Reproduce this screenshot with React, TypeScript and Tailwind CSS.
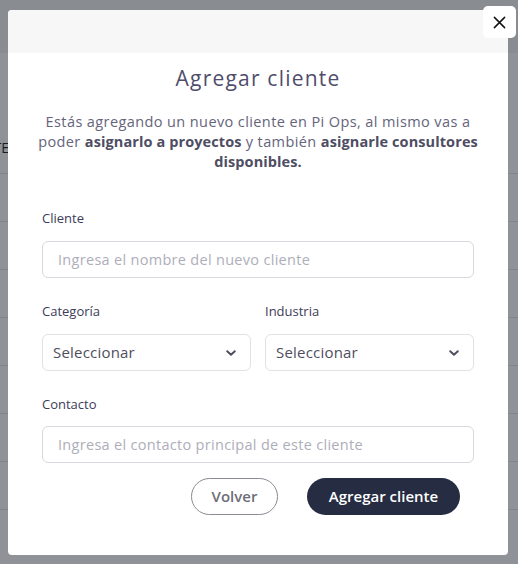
import React from 'react';

const font = { fontFamily: '"Open Sans", "Liberation Sans", sans-serif' };

const Chevron = () => (
  <svg width="14" height="14" viewBox="0 0 24 24" fill="none" stroke="#4f4e5e" strokeWidth="3.4" strokeLinecap="round" strokeLinejoin="round">
    <path d="M5.5 9l6.5 6 6.5-6" />
  </svg>
);

export default function App() {
  return (
    <div className="relative w-[518px] h-[564px] overflow-hidden bg-white" style={font}>
      {/* Page behind the modal */}
      <div className="h-[53px] bg-[#f2f3f4]" />
      <div className="pt-[85px] w-[9px] overflow-hidden flex justify-end whitespace-nowrap text-[14px] leading-[20px] text-[#111]">CLIENTE</div>
      <div className="mt-[15px]">
        {Array.from({ length: 8 }).map((_, i) => (
          <div key={i} className="h-[48px] border-t border-[#e2e2e2]" />
        ))}
      </div>

      {/* Backdrop */}
      <div className="absolute inset-0 bg-[#1f252d]/50" />

      {/* Modal */}
      <div className="absolute left-[8px] top-[10px] w-[500px] h-[545px] bg-white rounded-[4px]">
        <button className="absolute -right-[8px] -top-[4px] w-[33px] h-[32px] bg-white rounded-[5px] flex items-center justify-center">
          <svg width="13" height="13" viewBox="0 0 14 14" stroke="#111" strokeWidth="1.6" strokeLinecap="round">
            <path d="M1.5 1.5l11 11M12.5 1.5l-11 11" />
          </svg>
        </button>

        <div className="h-[43px] bg-[#f7f7f7] rounded-t-[4px]" />

        <h2 className="mt-[11px] text-center text-[21px] leading-[28px] tracking-[1.2px] font-medium text-[#4f4d6b]">Agregar cliente</h2>

        <p className="mt-[20px] px-[18px] text-center text-[14.5px] leading-[20px] tracking-[0.4px] text-[#65647a]">
          Estás agregando un nuevo cliente en Pi Ops, al mismo vas a poder{' '}
          <span className="font-bold tracking-[0.1px] text-[#4e4d63]">asignarlo a proyectos</span> y también{' '}
          <span className="font-bold tracking-[0.1px] text-[#4e4d63]">asignarle consultores disponibles.</span>
        </p>

        <div className="px-[34px] mt-[37px]">
          <label className="block text-[13px] leading-[18px] text-[#3d3c58]">Cliente</label>
          <div className="mt-[14px] h-[37px] border border-[#d8d8de] rounded-[6px] flex items-center px-[15px] text-[14.5px] tracking-[0.3px] text-[#aeaeba]">
            Ingresa el nombre del nuevo cliente
          </div>

          <div className="mt-[24px] grid grid-cols-2 gap-[14px]">
            {['Categoría', 'Industria'].map((l) => (
              <div key={l}>
                <label className="block text-[13px] leading-[18px] text-[#3d3c58]">{l}</label>
                <div className="mt-[14px] h-[37px] border border-[#e1e1e6] rounded-[6px] flex items-center justify-between pl-[10px] pr-[12px] text-[15px] tracking-[0.2px] text-[#4f4e5e]">
                  Seleccionar
                  <Chevron />
                </div>
              </div>
            ))}
          </div>

          <label className="mt-[24px] block text-[13px] leading-[18px] text-[#3d3c58]">Contacto</label>
          <div className="mt-[13px] h-[37px] border border-[#d8d8de] rounded-[6px] flex items-center px-[15px] text-[14.5px] tracking-[0.3px] text-[#aeaeba]">
            Ingresa el contacto principal de este cliente
          </div>

          <div className="mt-[15px] flex justify-end gap-[29px] pr-[14px]">
            <button className="w-[87px] h-[37px] rounded-full border border-[#8a8a94] text-[15px] font-semibold text-[#6e6e78]">Volver</button>
            <button className="w-[153px] h-[37px] rounded-full bg-[#262d42] text-[15px] font-semibold text-white">Agregar cliente</button>
          </div>
        </div>
      </div>
    </div>
  );
}
